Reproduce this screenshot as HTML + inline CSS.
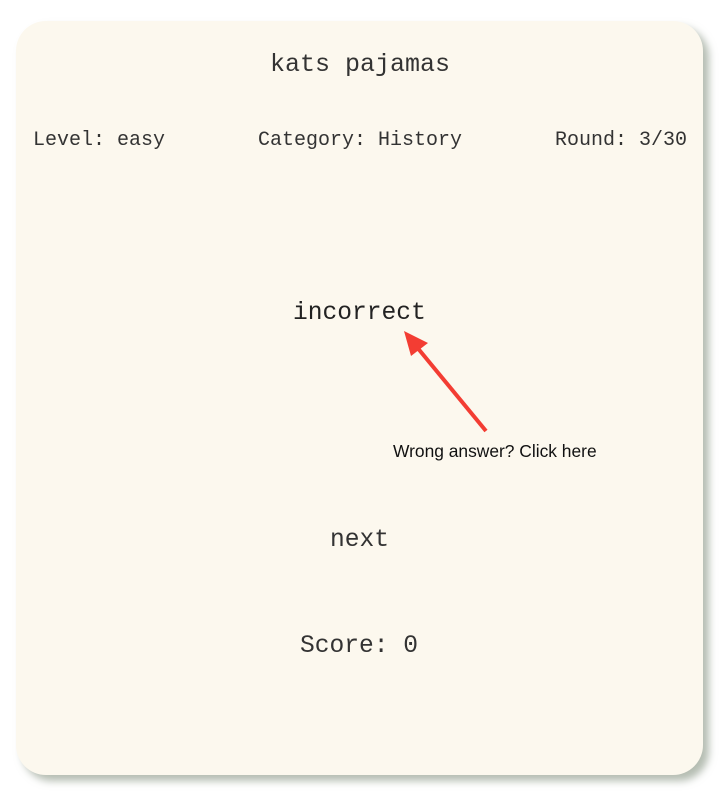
<!DOCTYPE html>
<html><head><style>
body{margin:0;width:725px;height:806px;background:#fff;position:relative;overflow:hidden;font-family:"Liberation Mono",monospace;color:#333}
.card{position:absolute;left:16px;top:21px;width:687px;height:754px;background:#fcf8ee;border-radius:30px;box-shadow:6px 6px 8px rgba(120,135,115,.55)}
.t{position:absolute;white-space:nowrap;line-height:1}
</style></head><body>
<div class="card"></div>
<div class="t" style="left:270px;top:52px;font-size:25px">kats pajamas</div>
<div class="t" style="left:33px;top:131px;font-size:20px">Level: easy</div>
<div class="t" style="left:258px;top:131px;font-size:20px">Category: History</div>
<div class="t" style="left:555px;top:131px;font-size:20px">Round: 3/30</div>
<div class="t" style="left:293px;top:302px;font-size:24.6px;color:#222">incorrect</div>
<svg style="position:absolute;left:0;top:0" width="725" height="806">
<line x1="486" y1="431" x2="416" y2="346" stroke="#f33d33" stroke-width="4"/>
<polygon points="404,331 428,343 411,356" fill="#f33d33"/>
</svg>
<div class="t" style="left:393px;top:443px;font-size:17.4px;font-family:'Liberation Sans',sans-serif;color:#111">Wrong answer? Click here</div>
<div class="t" style="left:330px;top:529px;font-size:24.6px">next</div>
<div class="t" style="left:300px;top:635px;font-size:24.6px">Score: 0</div>
</body></html>
